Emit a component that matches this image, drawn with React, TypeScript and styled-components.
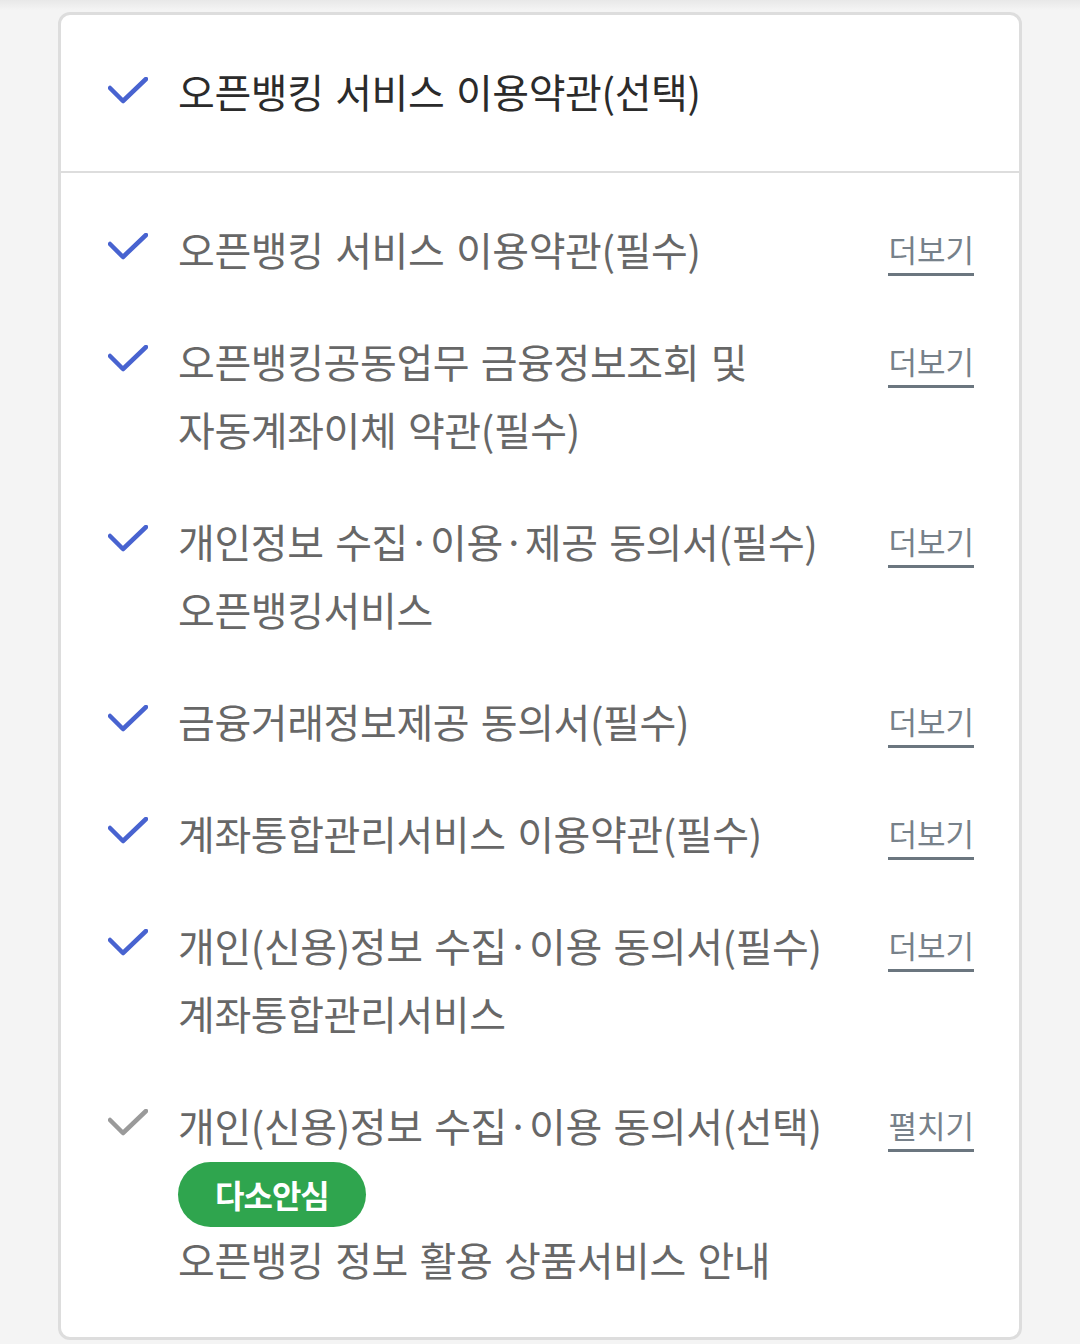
import React from "react";
import styled, { createGlobalStyle } from "styled-components";

const COLOR = {
  PAGE: "#f4f4f4",
  BORDER: "#dddddd",
  TITLE: "#2b2b2b",
  TEXT: "#676767",
  LINK: "#77818a",
  LINK_LINE: "#6b767f",
  BLUE: "#4863d0",
  GRAY_CHECK: "#9a9a9a",
  GREEN: "#2fa54e",
};

interface ITerm {
  lines: string[];
  action: string;
  checked: boolean;
  badge?: string;
  subLines?: string[];
}

const TERMS: ITerm[] = [
  { lines: ["오픈뱅킹 서비스 이용약관(필수)"], action: "더보기", checked: true },
  {
    lines: ["오픈뱅킹공동업무 금융정보조회 및", "자동계좌이체 약관(필수)"],
    action: "더보기",
    checked: true,
  },
  {
    lines: ["개인정보 수집·이용·제공 동의서(필수)", "오픈뱅킹서비스"],
    action: "더보기",
    checked: true,
  },
  { lines: ["금융거래정보제공 동의서(필수)"], action: "더보기", checked: true },
  { lines: ["계좌통합관리서비스 이용약관(필수)"], action: "더보기", checked: true },
  {
    lines: ["개인(신용)정보 수집·이용 동의서(필수)", "계좌통합관리서비스"],
    action: "더보기",
    checked: true,
  },
  {
    lines: ["개인(신용)정보 수집·이용 동의서(선택)"],
    action: "펼치기",
    checked: false,
    badge: "다소안심",
    subLines: ["오픈뱅킹 정보 활용 상품서비스 안내"],
  },
];

const CheckIcon = ({ color }: { color: string }) => (
  <svg width="40" height="28" viewBox="0 0 40 28" fill="none">
    <polyline
      points="2,11 15,24 38,2"
      stroke={color}
      strokeWidth="4.5"
      strokeLinecap="round"
      strokeLinejoin="round"
    />
  </svg>
);

const App = () => {
  return (
    <>
      <GlobalStyle />
      <Page>
        <Card>
          <Header>
            <CheckBox>
              <CheckIcon color={COLOR.BLUE} />
            </CheckBox>
            <HeaderTitle>오픈뱅킹 서비스 이용약관(선택)</HeaderTitle>
          </Header>
          <TermList>
            {TERMS.map((term, i) => (
              <TermRow key={i}>
                <CheckBox>
                  <CheckIcon color={term.checked ? COLOR.BLUE : COLOR.GRAY_CHECK} />
                </CheckBox>
                <TermBody>
                  {term.lines.map((line) => (
                    <TermLine key={line}>{line}</TermLine>
                  ))}
                  {term.badge && <Badge>{term.badge}</Badge>}
                  {term.subLines?.map((line) => (
                    <TermLine key={line}>{line}</TermLine>
                  ))}
                </TermBody>
                <MoreLink>{term.action}</MoreLink>
              </TermRow>
            ))}
          </TermList>
        </Card>
      </Page>
    </>
  );
};

const GlobalStyle = createGlobalStyle`
  html, body {
    margin: 0;
    padding: 0;
    background: ${COLOR.PAGE};
  }
  body {
    font-family: "Noto Sans CJK KR", "Noto Sans", sans-serif;
  }
  * {
    box-sizing: border-box;
  }
`;

const Page = styled.div`
  width: 1080px;
  min-height: 1344px;
  padding: 12px 58px 0;
  background: linear-gradient(to bottom, #e8e8e8 0px, ${COLOR.PAGE} 10px);
`;

const Card = styled.div`
  width: 964px;
  height: 1328px;
  background: #ffffff;
  border: 3px solid ${COLOR.BORDER};
  border-radius: 12px;
  overflow: hidden;
`;

const Header = styled.div`
  display: flex;
  align-items: center;
  height: 158px;
  padding: 0 0 0 47px;
  border-bottom: 2px solid ${COLOR.BORDER};
`;

const HeaderTitle = styled.div`
  font-size: 40px;
  letter-spacing: -0.4px;
  word-spacing: 3px;
  color: ${COLOR.TITLE};
  margin-bottom: 4px;
`;

const CheckBox = styled.div`
  width: 40px;
  height: 68px;
  margin-right: 30px;
  flex-shrink: 0;
  display: flex;
  align-items: center;
  justify-content: center;
  padding-bottom: 4px;
`;

const TermList = styled.div`
  padding: 20px 0 24px;
`;

const TermRow = styled.div`
  display: flex;
  align-items: flex-start;
  padding: 22px 45px 22px 47px;
`;

const TermBody = styled.div`
  flex: 1;
  display: flex;
  flex-direction: column;
  align-items: flex-start;
`;

const TermLine = styled.div`
  font-size: 40px;
  line-height: 68px;
  letter-spacing: -0.4px;
  word-spacing: 3px;
  color: ${COLOR.TEXT};
  white-space: nowrap;
`;

const Badge = styled.div`
  height: 65px;
  margin: 3px 0 -2px;
  padding: 0 37px;
  border-radius: 33px;
  background: ${COLOR.GREEN};
  color: #ffffff;
  font-size: 32px;
  font-weight: 700;
  letter-spacing: -1px;
  line-height: 65px;
`;

const MoreLink = styled.span`
  flex-shrink: 0;
  margin-top: 16px;
  padding-bottom: 6px;
  font-size: 31px;
  line-height: 36px;
  letter-spacing: 0px;
  color: ${COLOR.LINK};
  border-bottom: 3px solid ${COLOR.LINK_LINE};
`;

export default App;
